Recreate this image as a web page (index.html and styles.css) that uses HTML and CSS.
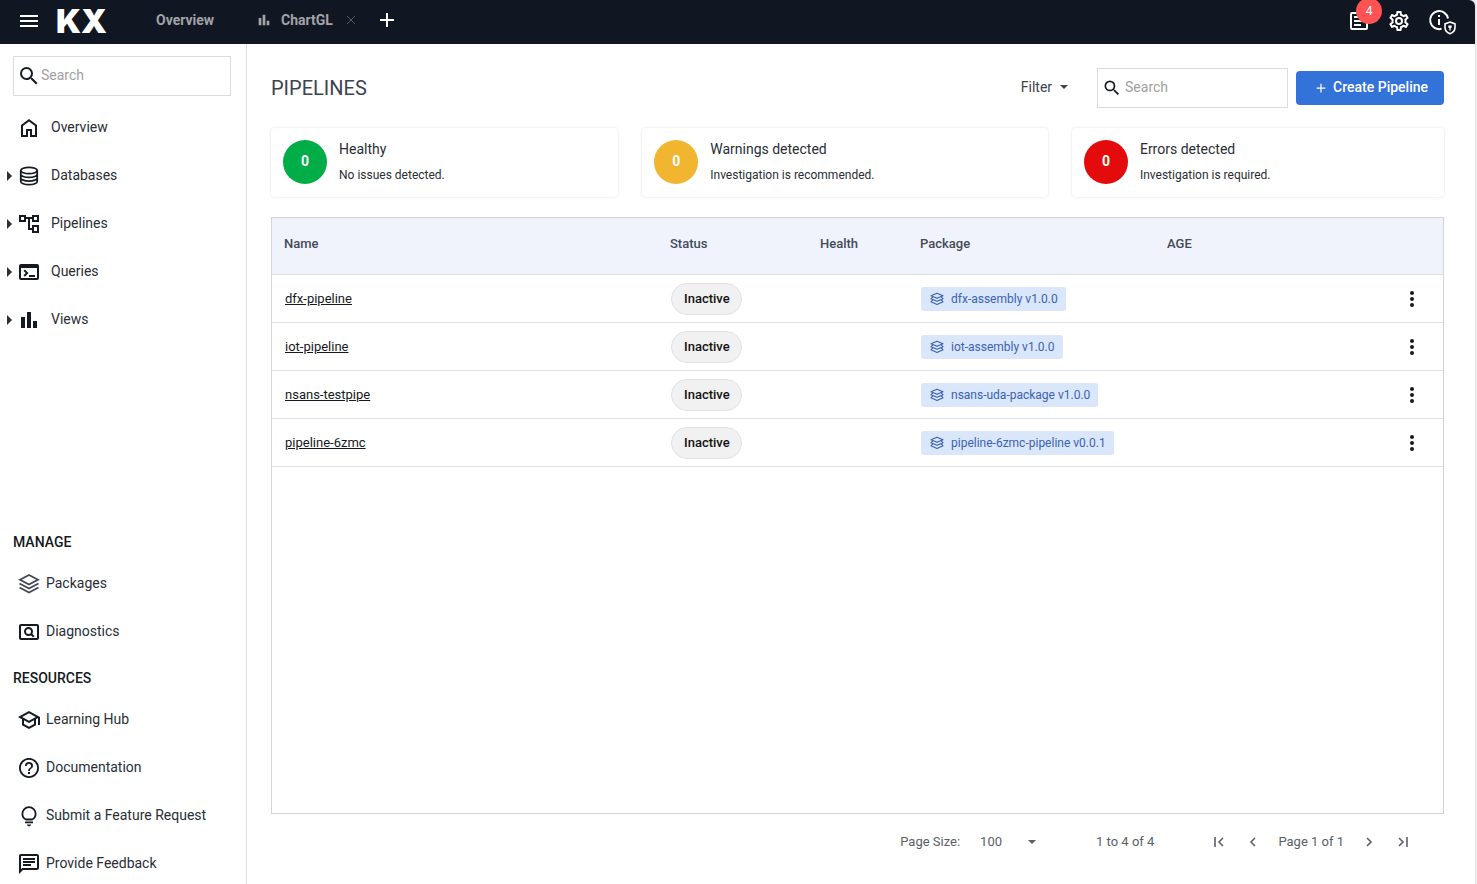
FILE: index.html
```html
<!DOCTYPE html>
<html lang="en">
<head>
<meta charset="utf-8">
<meta name="viewport" content="width=device-width, initial-scale=1">
<title>Pipelines</title>
<link rel="stylesheet" href="styles.css">
</head>
<body>
<svg class="sprite" aria-hidden="true">
  <symbol id="menu" viewBox="0 0 24 24"><path d="M3 6h18v2H3zm0 5h18v2H3zm0 5h18v2H3z"/></symbol>
  <symbol id="search" viewBox="0 0 24 24"><path d="M15.5 14h-.79l-.28-.27A6.47 6.47 0 0 0 16 9.5 6.5 6.5 0 1 0 9.5 16c1.61 0 3.09-.59 4.23-1.57l.27.28v.79l5 4.99L20.49 19l-4.99-5zm-6 0C7.01 14 5 11.99 5 9.5S7.01 5 9.5 5 14 7.01 14 9.5 11.99 14 9.5 14z"/></symbol>
  <symbol id="bars" viewBox="0 0 24 24"><path d="M4 9h4v11H4zm12 4h4v7h-4zm-6-9h4v16h-4z"/></symbol>
  <symbol id="home" viewBox="0 0 24 24"><path d="M6 19h3v-6h6v6h3v-9l-6-4.5L6 10v9zm-2 2V9l8-6 8 6v12h-7v-6h-2v6H4z"/></symbol>
  <symbol id="database" viewBox="0 0 24 24"><g fill="none" stroke="currentColor" stroke-width="1.8"><ellipse cx="12" cy="6.5" rx="8.2" ry="3.2"/><path d="M3.8 6.5v11c0 1.8 3.7 3.2 8.2 3.2s8.200-1.400 8.200-3.200v-11M3.800 10.200c0 1.800 3.700 3.200 8.200 3.200s8.200-1.400 8.200-3.200M3.800 13.900c0 1.800 3.700 3.200 8.200 3.200s8.200-1.400 8.200-3.200"/></g></symbol>
  <symbol id="tree" viewBox="0 0 24 24"><path d="M22 10V3h-7v2H9V3H2v7h7V7h2v11h4v3h7v-8h-7v3h-2V7h2v3h7zM7 8H4V5h3v3zm10 7h3v4h-3v-4zm0-10h3v3h-3V5z"/></symbol>
  <symbol id="terminal" viewBox="0 0 24 24"><path fill-rule="evenodd" d="M4 4h16a2 2 0 0 1 2 2v12a2 2 0 0 1-2 2H4a2 2 0 0 1-2-2V6a2 2 0 0 1 2-2zm0 4v10h16V8z"/><path d="M6.500 10.900 7.900 9.500l3.600 3.600-3.600 3.600-1.400-1.400 2.200-2.200zM12 15h6v2h-6z"/></symbol>
  <symbol id="layers" viewBox="0 0 24 24"><g fill="none" stroke="currentColor" stroke-width="1.8"><path d="m12 3 9 4.800-9 4.800-9-4.800z"/><path d="m2.500 11.500 9.500 5 9.500-5M2.500 15.500l9.500 5 9.500-5"/></g></symbol>
  <symbol id="stack" viewBox="0 0 16 16"><g fill="none" stroke="currentColor" stroke-width="1.1" stroke-linejoin="round" stroke-linecap="round"><path d="M8 2.200 14 4.700 10.400 6.200 8 7.200 5.600 6.200 2 4.700z"/><path d="M3.600 6.200 2 7.700l6 2.500 6-2.500-1.600-1.500M3.600 9.200 2 10.700l6 2.800 6-2.800-1.600-1.500"/></g></symbol>
  <symbol id="diagnostics" viewBox="0 0 24 24"><g fill="none" stroke="currentColor" stroke-width="2"><rect x="3" y="5" width="18" height="14" rx="1"/><circle cx="11.500" cy="11.500" r="3.500"/><path d="m14 14 2.800 2.800"/></g></symbol>
  <symbol id="school" viewBox="0 0 24 24"><path d="M12 3 1 9l4 2.180v6L12 21l7-3.820v-6l2-1.090V17h2V9L12 3zm6.820 6L12 12.720 5.180 9 12 5.280 18.820 9zM17 15.990l-5 2.730-5-2.730v-3.720L12 15l5-2.730v3.720z"/></symbol>
  <symbol id="help" viewBox="0 0 24 24"><path d="M11 18h2v-2h-2v2zm1-16C6.480 2 2 6.480 2 12s4.480 10 10 10 10-4.480 10-10S17.520 2 12 2zm0 18.200a8.200 8.200 0 1 1 0-16.400 8.200 8.200 0 0 1 0 16.400zM12 6a4 4 0 0 0-4 4h1.800c0-1.200 1-2.200 2.200-2.200s2.200 1 2.200 2.200c0 2-3.100 1.750-3.100 5h1.800c0-2.250 3.100-2.500 3.100-5a4 4 0 0 0-4-4z"/></symbol>
  <symbol id="bulb" viewBox="0 0 24 24"><path d="M9 15.500C6.800 14.500 5.400 12.200 5.400 9.700a6.600 6.600 0 1 1 13.200 0c0 2.500-1.400 4.800-3.600 5.800z" fill="none" stroke="currentColor" stroke-width="1.800"/><path d="M8 17.500h8v1.800H8zM10 20.500h4c0 1-1 1.800-2 1.800s-2-.8-2-1.800z"/></symbol>
  <symbol id="chat" viewBox="0 0 24 24"><path d="M4 4h16v12H5.170L4 17.170V4m0-2c-1.100 0-1.990.9-1.990 2L2 22l4-4h14c1.100 0 2-.9 2-2V4c0-1.100-.9-2-2-2H4zm2 10h8v2H6v-2zm0-3h12v2H6V9zm0-3h12v2H6V6z"/></symbol>
  <symbol id="notes" viewBox="0 0 24 24"><path fill-rule="evenodd" d="M5 3h14a2 2 0 0 1 2 2v14a2 2 0 0 1-2 2H5a2 2 0 0 1-2-2V5a2 2 0 0 1 2-2zm0 2v14h14V5z"/><path d="M7 7h10v2H7zm0 4h10v2H7zm0 4h7v2H7z"/></symbol>
  <symbol id="gear" viewBox="0 0 24 24"><path d="M19.430 12.980c.04-.32.07-.64.07-.98 0-.34-.03-.66-.07-.98l2.110-1.650c.19-.15.24-.42.12-.64l-2-3.460c-.09-.16-.26-.25-.44-.25-.06 0-.12.01-.17.03l-2.490 1c-.52-.4-1.080-.73-1.690-.98l-.38-2.650C14.460 2.180 14.250 2 14 2h-4c-.25 0-.46.18-.49.42l-.38 2.650c-.61.25-1.170.59-1.690.98l-2.490-1c-.06-.02-.12-.03-.18-.03-.17 0-.34.09-.43.25l-2 3.460c-.13.22-.07.49.12.64l2.110 1.650c-.04.32-.07.65-.07.98 0 .33.03.66.07.98l-2.110 1.650c-.19.15-.24.42-.12.64l2 3.460c.09.16.26.25.44.25.06 0 .12-.01.17-.03l2.490-1c.52.4 1.080.73 1.690.98l.38 2.650c.03.24.24.42.49.42h4c.25 0 .46-.18.49-.42l.38-2.650c.61-.25 1.170-.59 1.690-.98l2.490 1c.06.02.12.03.18.03.17 0 .34-.09.43-.25l2-3.460c.12-.22.07-.49-.12-.64l-2.110-1.650zm-1.980-1.710c.04.31.05.52.05.73 0 .21-.02.43-.05.73l-.14 1.130.89.7 1.080.84-.7 1.210-1.270-.51-1.040-.42-.9.68c-.43.32-.84.56-1.250.73l-1.060.43-.16 1.130-.2 1.350h-1.400l-.19-1.350-.16-1.130-1.060-.43c-.43-.18-.83-.41-1.230-.71l-.91-.7-1.060.43-1.270.51-.7-1.210 1.080-.84.89-.7-.14-1.130c-.03-.31-.05-.54-.05-.74s.02-.43.05-.73l.14-1.130-.89-.7-1.080-.84.7-1.210 1.270.51 1.040.42.9-.68c.43-.32.84-.56 1.250-.73l1.060-.43.16-1.130.2-1.350h1.390l.19 1.350.16 1.130 1.060.43c.43.18.83.41 1.230.71l.91.7 1.060-.43 1.270-.51.7 1.210-1.070.85-.89.7.14 1.130z"/><circle cx="12" cy="12" r="3" fill="none" stroke="currentColor" stroke-width="2"/></symbol>
  <symbol id="info" viewBox="0 0 30 30"><g fill="none" stroke="currentColor" stroke-width="2"><path d="M14.500 22.800A9 9 0 1 1 21 12.500"/><path d="m23 16 5 1.900v3.600c0 3-2 5.200-5 6.200-3-1-5-3.200-5-6.200v-3.600z" stroke-width="1.600"/></g><path d="M11 9h2v2h-2zm0 4h2v6h-2zM21.300 19.500h3.400v2.200h-1v2.800h-1.400v-2.800h-1z"/></symbol>
  <symbol id="plus" viewBox="0 0 16 16"><path d="M7 1h2v6h6v2H9v6H7V9H1V7h6z"/></symbol>
  <symbol id="close" viewBox="0 0 10 10"><path d="m1 1 8 8M9 1 1 9" fill="none" stroke="currentColor"/></symbol>
  <symbol id="down" viewBox="0 0 8 8"><path d="M0 2h8L4 6z"/></symbol>
  <symbol id="right" viewBox="0 0 6 10"><path d="M1 0l5 5-5 5z"/></symbol>
  <symbol id="dots" viewBox="0 0 24 24"><circle cx="12" cy="6" r="2"/><circle cx="12" cy="12" r="2"/><circle cx="12" cy="18" r="2"/></symbol>
  <symbol id="prev" viewBox="0 0 12 12"><path d="M8 2 4 6l4 4" fill="none" stroke="currentColor" stroke-width="1.600"/></symbol>
  <symbol id="first" viewBox="0 0 12 12"><path d="M10 2 6 6l4 4M2 1v10" fill="none" stroke="currentColor" stroke-width="1.600"/></symbol>
  <symbol id="next" viewBox="0 0 12 12"><path d="m4 2 4 4-4 4" fill="none" stroke="currentColor" stroke-width="1.600"/></symbol>
  <symbol id="last" viewBox="0 0 12 12"><path d="m2 2 4 4-4 4M10 1v10" fill="none" stroke="currentColor" stroke-width="1.600"/></symbol>
</svg>

<div class="app">
  <header class="topbar">
    <button class="icon-button" type="button" aria-label="Menu"><svg class="icon"><use href="#menu"/></svg></button>
    <a class="logo" href="#">KX</a>
    <nav class="tabs" aria-label="Open tabs">
      <a class="tab" href="#">Overview</a>
      <div class="tab-group">
        <a class="tab" href="#"><svg class="tab-icon"><use href="#bars"/></svg>ChartGL</a>
        <button class="tab-close" type="button" aria-label="Close ChartGL"><svg class="close-icon"><use href="#close"/></svg></button>
      </div>
      <button class="tab-add" type="button" aria-label="New tab"><svg class="add-icon"><use href="#plus"/></svg></button>
    </nav>
    <div class="tools">
      <button class="icon-button" type="button" aria-label="Notifications, 4 new"><svg class="icon"><use href="#notes"/></svg><span class="badge">4</span></button>
      <button class="icon-button" type="button" aria-label="Settings"><svg class="icon"><use href="#gear"/></svg></button>
      <button class="icon-button" type="button" aria-label="About"><svg class="info-icon"><use href="#info"/></svg></button>
    </div>
  </header>

  <div class="body">
    <aside class="sidebar">
      <label class="search side-search"><svg class="icon"><use href="#search"/></svg><input type="search" placeholder="Search" aria-label="Search navigation"></label>
      <nav class="nav" aria-label="Main">
        <a class="nav-item" href="#"><span class="arrow"></span><svg class="icon"><use href="#home"/></svg>Overview</a>
        <a class="nav-item" href="#"><svg class="arrow"><use href="#right"/></svg><svg class="icon"><use href="#database"/></svg>Databases</a>
        <a class="nav-item" href="#"><svg class="arrow"><use href="#right"/></svg><svg class="icon"><use href="#tree"/></svg>Pipelines</a>
        <a class="nav-item" href="#"><svg class="arrow"><use href="#right"/></svg><svg class="icon"><use href="#terminal"/></svg>Queries</a>
        <a class="nav-item" href="#"><svg class="arrow"><use href="#right"/></svg><svg class="icon"><use href="#bars"/></svg>Views</a>
      </nav>
      <nav class="links" aria-label="Manage and resources">
        <h2 class="links-title">MANAGE</h2>
        <a class="link-item" href="#"><svg class="icon muted"><use href="#layers"/></svg>Packages</a>
        <a class="link-item" href="#"><svg class="icon"><use href="#diagnostics"/></svg>Diagnostics</a>
        <h2 class="links-title">RESOURCES</h2>
        <a class="link-item" href="#"><svg class="icon"><use href="#school"/></svg>Learning Hub</a>
        <a class="link-item" href="#"><svg class="icon"><use href="#help"/></svg>Documentation</a>
        <a class="link-item" href="#"><svg class="icon"><use href="#bulb"/></svg>Submit a Feature Request</a>
        <a class="link-item" href="#"><svg class="icon"><use href="#chat"/></svg>Provide Feedback</a>
      </nav>
    </aside>

    <main class="main">
      <div class="heading">
        <h1 class="title">PIPELINES</h1>
        <button class="filter" type="button">Filter<svg class="caret"><use href="#down"/></svg></button>
        <label class="search main-search"><svg class="icon-small"><use href="#search"/></svg><input type="search" placeholder="Search" aria-label="Search pipelines"></label>
        <button class="create" type="button"><svg class="create-icon"><use href="#plus"/></svg>Create Pipeline</button>
      </div>

      <div class="cards">
        <section class="card"><span class="count healthy">0</span><div><h2 class="card-title">Healthy</h2><p class="card-text">No issues detected.</p></div></section>
        <section class="card"><span class="count warning">0</span><div><h2 class="card-title">Warnings detected</h2><p class="card-text">Investigation is recommended.</p></div></section>
        <section class="card"><span class="count error">0</span><div><h2 class="card-title">Errors detected</h2><p class="card-text">Investigation is required.</p></div></section>
      </div>

      <div class="grid">
        <table class="table">
          <colgroup><col><col class="col-status"><col class="col-health"><col class="col-package"><col class="col-age"><col class="col-menu"></colgroup>
          <thead><tr><th>Name</th><th>Status</th><th>Health</th><th>Package</th><th>AGE</th><th></th></tr></thead>
          <tbody>
            <tr><td><a class="name" href="#">dfx-pipeline</a></td><td><span class="status">Inactive</span></td><td></td><td><a class="package" href="#"><svg class="package-icon"><use href="#stack"/></svg>dfx-assembly v1.0.0</a></td><td></td><td><button class="row-menu" type="button" aria-label="Actions for dfx-pipeline"><svg class="icon"><use href="#dots"/></svg></button></td></tr>
            <tr><td><a class="name" href="#">iot-pipeline</a></td><td><span class="status">Inactive</span></td><td></td><td><a class="package" href="#"><svg class="package-icon"><use href="#stack"/></svg>iot-assembly v1.0.0</a></td><td></td><td><button class="row-menu" type="button" aria-label="Actions for iot-pipeline"><svg class="icon"><use href="#dots"/></svg></button></td></tr>
            <tr><td><a class="name" href="#">nsans-testpipe</a></td><td><span class="status">Inactive</span></td><td></td><td><a class="package" href="#"><svg class="package-icon"><use href="#stack"/></svg>nsans-uda-package v1.0.0</a></td><td></td><td><button class="row-menu" type="button" aria-label="Actions for nsans-testpipe"><svg class="icon"><use href="#dots"/></svg></button></td></tr>
            <tr><td><a class="name" href="#">pipeline-6zmc</a></td><td><span class="status">Inactive</span></td><td></td><td><a class="package" href="#"><svg class="package-icon"><use href="#stack"/></svg>pipeline-6zmc-pipeline v0.0.1</a></td><td></td><td><button class="row-menu" type="button" aria-label="Actions for pipeline-6zmc"><svg class="icon"><use href="#dots"/></svg></button></td></tr>
          </tbody>
        </table>
      </div>

      <footer class="pager">
        <div class="page-size"><label for="size">Page Size:</label><div class="select"><select id="size"><option>100</option><option>50</option></select><svg class="caret"><use href="#down"/></svg></div></div>
        <span>1 to 4 of 4</span>
        <div class="pages">
          <button class="page-button" type="button" aria-label="First page"><svg class="page-icon"><use href="#first"/></svg></button>
          <button class="page-button" type="button" aria-label="Previous page"><svg class="page-icon"><use href="#prev"/></svg></button>
          <span>Page 1 of 1</span>
          <button class="page-button" type="button" aria-label="Next page"><svg class="page-icon"><use href="#next"/></svg></button>
          <button class="page-button" type="button" aria-label="Last page"><svg class="page-icon"><use href="#last"/></svg></button>
        </div>
      </footer>
    </main>
  </div>
</div>
</body>
</html>
```
FILE: styles.css
```css
* { box-sizing: border-box; }
html, body { height: 100%; }
body {
  margin: 0;
  overflow: hidden;
  background: #f1f1f1;
  color: #161a22;
  font: 400 14px/20px Roboto, sans-serif;
}
h1, h2, p { margin: 0; }
a { color: inherit; text-decoration: none; }
svg { fill: currentColor; flex: none; display: block; }
button, input, select { font: inherit; color: inherit; }
button { border: 0; padding: 0; background: none; display: flex; align-items: center; cursor: pointer; }
.sprite { position: absolute; width: 0; height: 0; }
.icon { width: 24px; height: 24px; color: #161a22; }
.icon-small { width: 20px; height: 20px; }
.icon.muted { color: #454955; }

.app { height: 100vh; display: flex; flex-direction: column; margin-right: 2px; background: #fff; border-radius: 0 6px 0 0; box-shadow: 0 0 2px #ccc; overflow: hidden; }
.topbar { flex: none; height: 44px; display: flex; align-items: center; padding: 0 18px 2px 17px; background: #111722; color: #fff; }
.topbar .icon { color: #fff; }
.icon-button { position: relative; }
.logo { margin-left: 15px; font: 900 33px/40px Inter, sans-serif; }
.tabs { display: flex; align-items: center; margin-left: 49px; padding-bottom: 2px; }
.tab { display: flex; align-items: center; color: #a2a4a8; font-weight: 700; }
.tab-group { display: flex; align-items: center; margin-left: 42px; }
.tab-icon { width: 16px; height: 16px; margin-right: 9px; }
.tab-close { margin-left: 13px; color: #555a63; }
.close-icon { width: 10px; height: 10px; }
.tab-add { margin-left: 23px; }
.add-icon { width: 16px; height: 16px; }
.tools { display: flex; align-items: center; gap: 16px; margin-left: auto; }
.info-icon { width: 30px; height: 30px; }
.badge { position: absolute; left: 9px; top: -11px; width: 26px; height: 26px; border-radius: 50%; background: #ff5252; font-size: 12px; line-height: 26px; text-align: center; }

.body { flex: 1; min-height: 0; display: flex; }
.sidebar { width: 247px; flex: none; display: flex; flex-direction: column; border-right: 1px solid #dedede; overflow: hidden; }
.search { display: flex; align-items: center; height: 40px; border: 1px solid #dcdcdc; background: #fff; }
.search input { flex: 1; min-width: 0; border: 0; padding: 0 0 2px; outline: 0; background: none; }
.search input::placeholder { color: #a0a0a0; opacity: 1; }
.side-search { flex: none; margin: 12px 15px 0 13px; padding-left: 3px; }
.nav { display: flex; flex-direction: column; gap: 8px; padding-top: 12px; color: #2a2e36; }
.nav-item { display: flex; align-items: center; height: 40px; padding: 0 0 2px 6px; }
.arrow { width: 6px; height: 10px; margin: 2px 5px 0 0; }
.nav-item .icon { margin: 2px 10px 0 0; }
.links { display: flex; flex-direction: column; gap: 8px; margin-top: auto; color: #2a2e36; }
.links-title { margin-top: 4px; padding-left: 13px; color: #161a22; font-size: 14px; line-height: 28px; font-weight: 500; }
.link-item { display: flex; align-items: center; gap: 5px; height: 40px; padding: 0 0 2px 17px; }
.link-item .icon { margin-top: 2px; }

.main { flex: 1; min-width: 0; display: flex; flex-direction: column; padding: 24px 31px 22px 24px; }
.heading { display: flex; align-items: center; height: 40px; }
.title { flex: 1; font-size: 20px; line-height: 24px; font-weight: 400; color: #3d4352; }
.filter { gap: 8px; padding-bottom: 2px; color: #3d4352; }
.caret { width: 8px; height: 8px; }
.main-search { width: 191px; margin: 0 8px 0 29px; padding-left: 4px; gap: 3px; }
.create { height: 34px; padding: 0 16px 2px 20px; gap: 7px; border-radius: 4px; background: #3272d9; color: #fff; font-weight: 500; }
.create-icon { width: 10px; height: 10px; margin-top: 2px; }

.cards { display: flex; gap: 24px; margin-top: 20px; }
.card { flex: 1 1 auto; display: flex; gap: 12px; height: 69px; padding: 12px; border-radius: 4px; box-shadow: 0 0 3px rgba(0, 0, 0, .12); color: #2a2e36; }
.count { flex: none; width: 44px; height: 44px; border-radius: 50%; color: #fff; font-weight: 700; line-height: 43px; text-align: center; }
.healthy { background: #00ad47; }
.warning { background: #f1b52f; }
.error { background: #e30b0b; }
.card-title { font-size: 14px; line-height: 18px; font-weight: 400; }
.card-text { margin-top: 7px; font-size: 12px; line-height: 20px; }

.grid { flex: 1; min-height: 0; margin-top: 20px; border: 1px solid #d0d4e0; overflow: auto; }
.table { width: 100%; table-layout: fixed; border-collapse: separate; border-spacing: 0; font-size: 13px; }
.col-status { width: 150px; }
.col-health { width: 100px; }
.col-package { width: 247px; }
.col-age { width: 216px; }
.col-menu { width: 72px; }
th { height: 57px; padding: 0 12px 4px; background: #f0f3fc; border-bottom: 1px solid #dbdde2; color: #444a57; font-weight: 500; text-align: left; }
td { height: 48px; padding: 1px 0 0 13px; border-bottom: 1px solid #dedfe1; white-space: nowrap; }
.name { text-decoration: underline; }
.status { display: inline-block; padding: 0 11px 0 12px; border: 1px solid #e2e2e2; border-radius: 16px; background: #f1f1f1; color: #111; line-height: 30px; font-weight: 500; }
.package { display: inline-flex; align-items: center; gap: 6px; height: 24px; padding: 0 8px; border-radius: 3px; background: #dae6fa; color: #3a63b5; font-size: 12px; vertical-align: middle; }
.package-icon { width: 16px; height: 16px; }
.row-menu { margin-left: 16px; }

.pager { display: flex; align-items: center; justify-content: flex-end; height: 48px; padding: 8px 32px 0 0; color: #5a6068; font-size: 13px; }
.page-size { display: flex; flex: none; align-items: center; gap: 20px; margin-right: 60px; }
.select { position: relative; display: flex; align-items: center; }
.select select { appearance: none; width: 56px; border: 0; padding: 0; background: none; }
.select .caret { position: absolute; right: 0; pointer-events: none; }
.pages { display: flex; flex: none; align-items: center; gap: 16px; margin-left: 56px; }
.page-button { width: 18px; justify-content: center; }
.page-icon { width: 12px; height: 12px; }
```
